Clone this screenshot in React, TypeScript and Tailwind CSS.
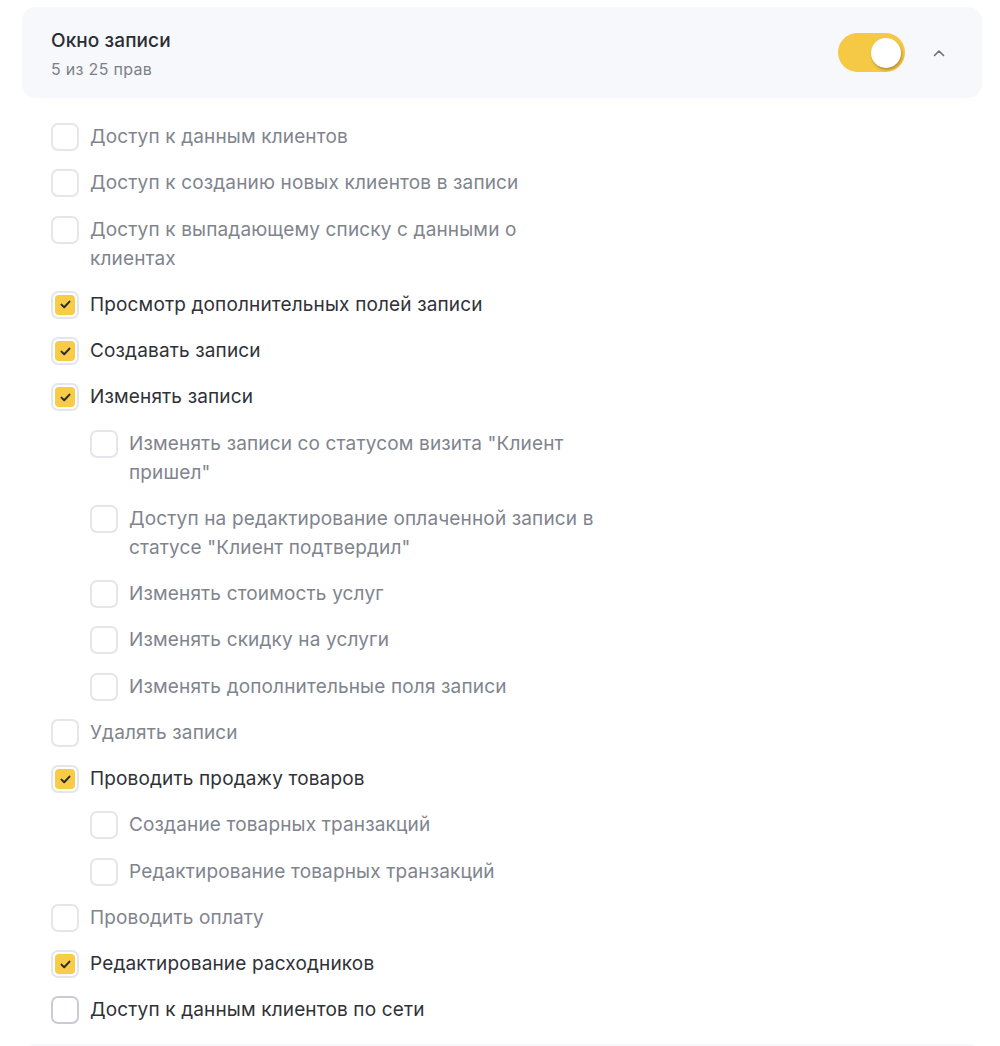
import React from "react";

type Item = { label: string; checked?: boolean; level?: number; hover?: boolean };

const items: Item[] = [
  { label: "Доступ к данным клиентов" },
  { label: "Доступ к созданию новых клиентов в записи" },
  { label: "Доступ к выпадающему списку с данными о клиентах" },
  { label: "Просмотр дополнительных полей записи", checked: true },
  { label: "Создавать записи", checked: true },
  { label: "Изменять записи", checked: true },
  { label: 'Изменять записи со статусом визита "Клиент пришел"', level: 1 },
  { label: 'Доступ на редактирование оплаченной записи в статусе "Клиент подтвердил"', level: 1 },
  { label: "Изменять стоимость услуг", level: 1 },
  { label: "Изменять скидку на услуги", level: 1 },
  { label: "Изменять дополнительные поля записи", level: 1 },
  { label: "Удалять записи" },
  { label: "Проводить продажу товаров", checked: true },
  { label: "Создание товарных транзакций", level: 1 },
  { label: "Редактирование товарных транзакций", level: 1 },
  { label: "Проводить оплату" },
  { label: "Редактирование расходников", checked: true },
  { label: "Доступ к данным клиентов по сети", hover: true },
];

function Box({ checked, hover }: { checked?: boolean; hover?: boolean }) {
  return (
    <div
      className={
        "mt-[1px] flex h-[28px] w-[28px] shrink-0 items-center justify-center rounded-[7px] border-2 bg-white " +
        (hover ? "border-[#c9ccd4]" : "border-[#e4e6ec]")
      }
    >
      {checked && (
        <div className="flex h-[20px] w-[20px] items-center justify-center rounded-[4px] bg-[#f8cc46]">
          <svg width="11" height="9" viewBox="0 0 11 9" fill="none">
            <path d="M1.5 4.6 L4.2 7.2 L9.5 1.6" stroke="#2a2c31" strokeWidth="2" strokeLinecap="round" strokeLinejoin="round" />
          </svg>
        </div>
      )}
    </div>
  );
}

export default function App() {
  return (
    <div className="h-[1046px] overflow-hidden bg-white pt-[7px] font-['Inter','Noto_Sans',sans-serif]">
      <div className="ml-[22px] w-[960px]">
        <div className="flex h-[91px] items-center rounded-[14px] bg-[#f7f8fb] pl-[29px] pr-[37px]">
          <div className="flex-1 pt-[2px]">
            <div className="text-[19px] leading-[24px] font-medium tracking-[0.1px] text-[#2b2d33]">Окно записи</div>
            <div className="mt-[6px] text-[16px] leading-[20px] tracking-[0.3px] text-[#7c8089]">5 из 25 прав</div>
          </div>
          <div className="relative h-[39px] w-[67px] rounded-full bg-[#f6c944]">
            <div className="absolute right-[4px] top-[4.5px] h-[30px] w-[30px] rounded-full bg-white shadow-[1px_2px_3px_rgba(0,0,0,0.28)]" />
          </div>
          <div className="ml-[28px] flex h-[20px] w-[12px] items-center justify-center">
            <svg width="12" height="8" viewBox="0 0 12 8" fill="none">
              <path d="M1.5 6.5 L6 2 L10.5 6.5" stroke="#6d7079" strokeWidth="1.6" strokeLinecap="round" strokeLinejoin="round" />
            </svg>
          </div>
        </div>

        <div className="flex w-[580px] flex-col gap-[17.25px] pl-[29px] pt-[24px]">
          {items.map((it, i) => (
            <div key={i} className={"flex items-start gap-[11px] " + (it.level ? "pl-[39px]" : "")}>
              <Box checked={it.checked} hover={it.hover} />
              <div
                className={
                  "text-[19px] leading-[29px] tracking-[0.15px] " +
                  (it.checked || it.hover ? "text-[#2f3137]" : "text-[#80848d]")
                }
              >
                {it.label}
              </div>
            </div>
          ))}
        </div>

        <div className="mt-[20px] h-[91px] rounded-[14px] bg-[#f7f8fb]" />
      </div>
    </div>
  );
}
